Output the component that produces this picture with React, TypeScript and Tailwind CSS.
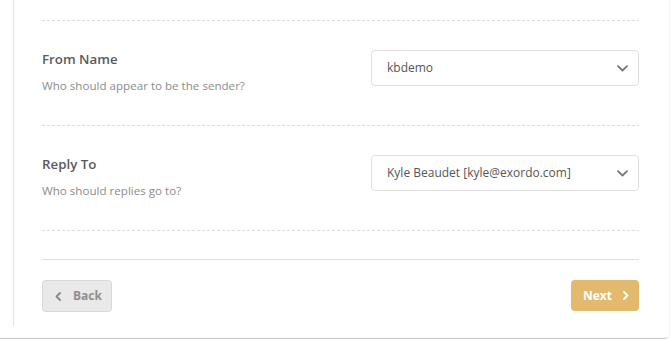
import React from "react";

function Dashed() {
  return (
    <div className="h-px w-full bg-[linear-gradient(to_right,#dcdcdc_60%,transparent_60%)] bg-[length:5px_1px] bg-repeat-x" />
  );
}

function Chevron() {
  return (
    <svg width="11" height="7" viewBox="0 0 11 7" fill="none">
      <path d="M1 1.2L5.5 5.5L10 1.2" stroke="#777" strokeWidth="1.8" strokeLinecap="round" strokeLinejoin="round" />
    </svg>
  );
}

function Row({ label, desc, value }: { label: string; desc: string; value: string }) {
  return (
    <div className="flex justify-between items-start pt-[29px] h-[104px]">
      <div>
        <div className="text-[13.3px] leading-[18px] font-semibold text-[#5a5a5a]">{label}</div>
        <div className="mt-[10px] text-[11.6px] leading-[16px] text-[#8c8c8c]">{desc}</div>
      </div>
      <div className="w-[268px] h-[36px] border border-[#e0e0e0] rounded-[4px] pl-[15px] pr-[10px] flex items-center justify-between text-[12px] text-[#555] bg-white">
        <span>{value}</span>
        <Chevron />
      </div>
    </div>
  );
}

export default function App() {
  return (
    <div className="w-[670px] h-[339px] bg-white overflow-hidden" style={{ fontFamily: '"Open Sans", "Noto Sans", sans-serif' }}>
      <div className="h-[339px] border-b border-r border-b-[#c6c6c6] border-r-[#f4f4f4] rounded-br-[5px]">
        <div className="ml-[13px] h-[326px] border-l border-[#e3e3e3] pl-[28px] pr-[30px] pt-[20px]">
          <Dashed />
          <Row label="From Name" desc="Who should appear to be the sender?" value="kbdemo" />
          <Dashed />
          <Row label="Reply To" desc="Who should replies go to?" value="Kyle Beaudet [kyle@exordo.com]" />
          <Dashed />
          <div className="h-[28px]" />
          <div className="h-px w-full bg-[#dedede]" />
          <div className="flex justify-between items-start pt-[20px]">
            <button className="w-[70px] h-[32px] rounded-[4px] border border-[#d8d8d8] bg-[#e9e9e9] flex items-center pl-[12px] gap-[12px] text-[12px] font-bold text-[#8f8f8f]">
              <svg width="6" height="9" viewBox="0 0 6 9" fill="none">
                <path d="M5 1L1.5 4.5L5 8" stroke="#888" strokeWidth="1.8" strokeLinecap="round" strokeLinejoin="round" />
              </svg>
              <span>Back</span>
            </button>
            <button className="w-[68px] h-[31px] rounded-[4px] bg-[#e2b96d] flex items-center pl-[12px] gap-[11px] text-[12px] font-bold text-white">
              <span>Next</span>
              <svg width="6" height="9" viewBox="0 0 6 9" fill="none">
                <path d="M1 1L4.5 4.5L1 8" stroke="#fff" strokeWidth="1.8" strokeLinecap="round" strokeLinejoin="round" />
              </svg>
            </button>
          </div>
        </div>
      </div>
    </div>
  );
}
